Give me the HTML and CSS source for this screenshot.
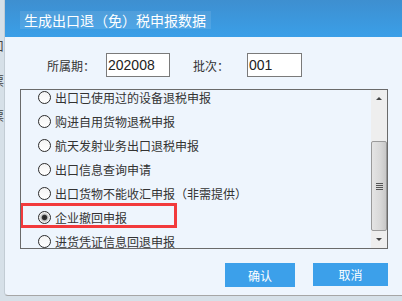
FILE: index.html
```html
<!DOCTYPE html>
<html lang="zh-CN">
<head>
    <meta charset="UTF-8">
    <title>生成出口退（免）税申报数据</title>
    <link rel="stylesheet" href="styles.css">
</head>
<body>
    <!-- page behind the dialog, only its edge shows -->
    <div class="behind">
        <div class="behind-text">
            <p>口</p>
            <p>票</p>
            <p>票</p>
        </div>
    </div>

    <div class="dialog">
        <div class="title-bar">
            <span class="title">生成出口退<span class="p">（</span>免<span class="p">）</span>税申报数据</span>
        </div>

        <div class="dialog-body">
            <div class="form-row">
                <label class="period-label" for="period">所属期<span class="p">：</span></label>
                <input type="text" id="period" class="period-input" value="202008">
                <label class="batch-label" for="batch">批次<span class="p">：</span></label>
                <input type="text" id="batch" class="batch-input" value="001">
            </div>

            <div class="list-box">
                <div class="list-items">
                    <div class="item"><span class="radio"></span>出口已使用过的设备退税申报</div>
                    <div class="item"><span class="radio"></span>购进自用货物退税申报</div>
                    <div class="item"><span class="radio"></span>航天发射业务出口退税申报</div>
                    <div class="item"><span class="radio"></span>出口信息查询申请</div>
                    <div class="item"><span class="radio"></span>出口货物不能收汇申报<span class="p">（</span>非需提供<span class="p">）</span></div>
                    <div class="item"><span class="radio checked"></span>企业撤回申报</div>
                    <div class="item"><span class="radio"></span>进货凭证信息回退申报</div>
                </div>
                <div class="scrollbar">
                    <div class="arrow up"></div>
                    <div class="track">
                        <div class="thumb"><span class="grip"></span></div>
                    </div>
                    <div class="arrow down"></div>
                </div>
                <!-- highlight drawn over the selected row -->
                <div class="mark"></div>
            </div>

            <div class="buttons">
                <button class="btn ok">确认</button>
                <button class="btn cancel">取消</button>
            </div>
        </div>
    </div>
</body>
</html>
```

FILE: styles.css
```css
body {
    margin: 0;
    height: 301px;
    overflow: hidden;
    display: flex;
    background-color: #d6e0e8;
    font-family: "Noto Sans CJK SC", "Liberation Sans", sans-serif;
    color: #333;
}
/* full-width punctuation, kept one em wide and centred */
.p {
    display: inline-block;
    width: 1em;
    text-align: center;
}
.behind {
    width: 4px;
    overflow: hidden;
    flex-shrink: 0;
}
.behind-text {
    margin-left: -8px;
    padding-top: 38px;
    font-size: 12px;
    color: #444;
}
.behind-text p {
    margin: 0 0 20px 0;
    line-height: 15px;
}
.dialog {
    width: 420px;
    height: 296px;
    flex-shrink: 0;
    background-color: #eef5fd;
    border-left: 1px solid #c2ccd4;
    border-bottom: 1px solid #a6a6a6;
    border-bottom-left-radius: 4px;
    box-sizing: border-box;
}
.title-bar {
    height: 37px;
    background: linear-gradient(#3e8fd0, #3a9fe8);
    padding-top: 7px;
    box-sizing: border-box;
}
.title {
    display: inline-block;
    margin-left: 15px;
    padding: 0 5px 0 4px;
    height: 18px;
    line-height: 18px;
    font-size: 14px;
    color: #fff;
    background-color: rgba(255, 255, 255, 0.1);
}
.dialog-body {
    padding: 16px 0 0 15px;
    width: 368px;
}
.form-row {
    display: flex;
    align-items: center;
    height: 24px;
    font-size: 12px;
}
.period-label {
    margin-left: 27px;
    width: 59px;
}
.batch-label {
    margin-left: 23px;
    width: 54px;
}
.form-row input {
    height: 24px;
    box-sizing: border-box;
    border: 1px solid #7a7a7a;
    background: #fff;
    padding: 0 1px;
    font-family: "Liberation Sans", sans-serif;
    font-size: 14px;
    color: #222;
    outline: none;
}
.period-input {
    width: 64px;
}
.batch-input {
    width: 55px;
}
.list-box {
    position: relative;
    margin-top: 12px;
    height: 160px;
    border: 1px solid #6a6a6a;
    box-sizing: border-box;
    display: flex;
    overflow: hidden;
}
.list-items {
    flex: 1;
    margin-top: -5px;
    padding-left: 17px;
}
.item {
    display: flex;
    align-items: center;
    height: 24px;
    font-size: 12px;
    color: #333;
}
.radio {
    width: 13px;
    height: 13px;
    box-sizing: border-box;
    border: 1px solid #2b2b2b;
    border-radius: 50%;
    background: linear-gradient(#f4f4f4, #fff);
    margin-right: 4px;
}
.radio.checked {
    background: radial-gradient(circle, #222 0, #333 2.2px, #bdbdbd 3.2px, #f4f4f4 5px);
}
.scrollbar {
    width: 16px;
    background-color: #eeeeee;
    display: flex;
    flex-direction: column;
}
.arrow {
    height: 17px;
    display: flex;
    justify-content: center;
    align-items: center;
}
.arrow::after {
    content: "";
    border-left: 3px solid transparent;
    border-right: 3px solid transparent;
}
.arrow.up::after {
    border-bottom: 3px solid #444;
}
.arrow.down::after {
    border-top: 3px solid #444;
}
.track {
    flex: 1;
    padding-top: 34px;
}
.thumb {
    height: 90px;
    box-sizing: border-box;
    border: 1px solid #9a9a9a;
    border-radius: 2px;
    background: linear-gradient(90deg, #e4e4e4, #d8d8d8 60%, #c8c8c8);
    display: flex;
    justify-content: center;
    align-items: center;
}
.grip {
    width: 7px;
    height: 7px;
    background: repeating-linear-gradient(#555 0, #555 1px, transparent 1px, transparent 2px);
}
.mark {
    position: absolute;
    left: -1px;
    top: 113px;
    width: 157px;
    height: 25px;
    box-sizing: border-box;
    border: 3px solid #f23a3c;
}
.buttons {
    display: flex;
    justify-content: flex-end;
    gap: 18px;
    margin-top: 14px;
}
.btn {
    height: 24px;
    border: none;
    background-color: #3ca0ea;
    color: #fff;
    font-family: "Noto Sans CJK SC", sans-serif;
    font-size: 12px;
    padding: 0;
}
.ok {
    width: 70px;
}
.cancel {
    width: 75px;
    height: 23px;
}
```
